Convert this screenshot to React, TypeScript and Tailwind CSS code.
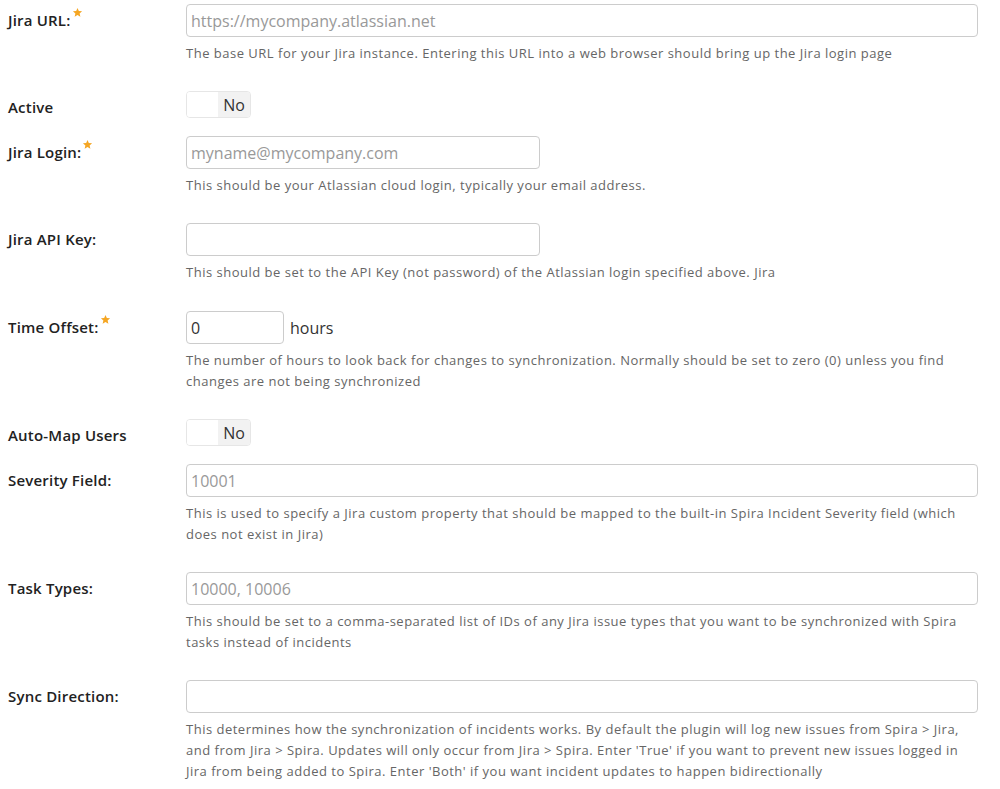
const font = { fontFamily: '"Open Sans", "DejaVu Sans", sans-serif' };

function Star() {
  return (
    <svg viewBox="0 0 24 24" className="w-[11px] h-[11px] inline-block align-top -mt-[3px] ml-[1px]" fill="#f5a623">
      <path d="M12 2l2.9 6.9 7.1.6-5.4 4.7 1.7 7-6.3-3.9-6.3 3.9 1.7-7L2 9.5l7.1-.6z" />
    </svg>
  );
}

function Label({ text, required }: { text: string; required?: boolean }) {
  return (
    <div className="w-[178px] shrink-0 pt-[6px] leading-[21px] text-[15px] font-semibold text-[#222] tracking-[0.2px]">
      {text}
      {required && <Star />}
    </div>
  );
}

function Help({ children, mb = 'mb-[27px]' }: { children: React.ReactNode; mb?: string }) {
  return (
    <p className={`mt-[6px] ${mb} text-[13px] leading-[21px] text-[#666] tracking-[0.5px]`}>{children}</p>
  );
}

function TextInput({ placeholder, value, width }: { placeholder?: string; value?: string; width: string }) {
  return (
    <input
      type="text"
      defaultValue={value}
      placeholder={placeholder}
      className={`${width} h-[33px] border border-[#ccc] rounded-[4px] px-[4px] text-[16px] text-[#333] placeholder-[#999] outline-none bg-white`}
    />
  );
}

function Toggle() {
  return (
    <div className="flex w-[65px] h-[27px] border border-[#e6e6e6] rounded-[4px] overflow-hidden mb-[18px]">
      <div className="w-[31px] bg-white" />
      <div className="flex-1 bg-[#f2f2f2] flex items-center justify-center text-[16px] text-[#333]">No</div>
    </div>
  );
}

export default function App() {
  return (
    <div className="min-h-screen bg-white pl-[8px] pr-[22px] pt-[4px]" style={font}>
      <div className="flex">
        <Label text="Jira URL:" required />
        <div className="flex-1">
          <TextInput width="w-full" placeholder="https://mycompany.atlassian.net" />
          <Help>The base URL for your Jira instance. Entering this URL into a web browser should bring up the Jira login page</Help>
        </div>
      </div>

      <div className="flex">
        <Label text="Active" />
        <Toggle />
      </div>

      <div className="flex">
        <Label text="Jira Login:" required />
        <div className="flex-1">
          <TextInput width="w-[354px]" placeholder="myname@mycompany.com" />
          <Help>This should be your Atlassian cloud login, typically your email address.</Help>
        </div>
      </div>

      <div className="flex">
        <Label text="Jira API Key:" />
        <div className="flex-1">
          <TextInput width="w-[354px]" />
          <Help mb="mb-[28px]">
            This should be set to the API Key (not password) of the Atlassian login specified above. Jira
          </Help>
        </div>
      </div>

      <div className="flex">
        <Label text="Time Offset:" required />
        <div className="flex-1">
          <div className="flex items-center gap-[6px]">
            <TextInput width="w-[98px]" value="0" />
            <span className="text-[16px] text-[#333]">hours</span>
          </div>
          <Help>
            The number of hours to look back for changes to synchronization. Normally should be set to zero (0) unless you find changes are not being synchronized
          </Help>
        </div>
      </div>

      <div className="flex">
        <Label text="Auto-Map Users" />
        <Toggle />
      </div>

      <div className="flex">
        <Label text="Severity Field:" />
        <div className="flex-1">
          <TextInput width="w-full" placeholder="10001" />
          <Help>
            This is used to specify a Jira custom property that should be mapped to the built-in Spira Incident Severity field (which does not exist in Jira)
          </Help>
        </div>
      </div>

      <div className="flex">
        <Label text="Task Types:" />
        <div className="flex-1">
          <TextInput width="w-full" placeholder="10000, 10006" />
          <Help>
            This should be set to a comma-separated list of IDs of any Jira issue types that you want to be synchronized with Spira tasks instead of incidents
          </Help>
        </div>
      </div>

      <div className="flex">
        <Label text="Sync Direction:" />
        <div className="flex-1">
          <TextInput width="w-full" />
          <Help>
            This determines how the synchronization of incidents works. By default the plugin will log new issues from Spira &gt; Jira, and from Jira &gt; Spira. Updates will only occur from Jira &gt; Spira. Enter 'True' if you want to prevent new issues logged in Jira from being added to Spira. Enter 'Both' if you want incident updates to happen bidirectionally
          </Help>
        </div>
      </div>
    </div>
  );
}
